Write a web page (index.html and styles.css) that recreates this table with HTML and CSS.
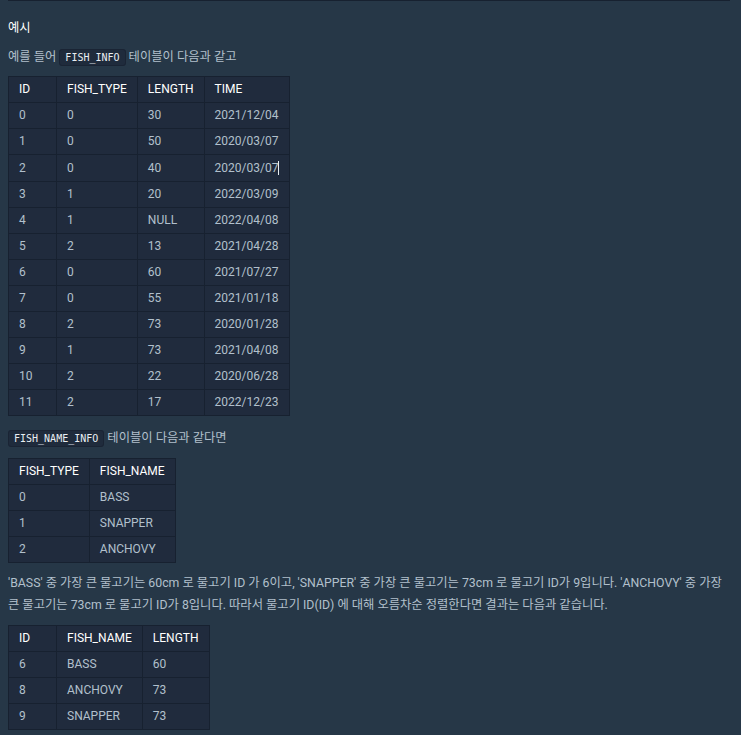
FILE: index.html
```html
<!DOCTYPE html>
<html lang="ko">
<head>
<meta charset="utf-8">
<link rel="stylesheet" href="styles.css">
</head>
<body>
<div class="wrap">
  <h5 class="title">예시</h5>
  <p class="para first">예를 들어 <code class="code">FISH_INFO</code> 테이블이 다음과 같고</p>
  <table class="tbl">
    <thead>
      <tr><th class="id">ID</th><th>FISH_TYPE</th><th>LENGTH</th><th>TIME</th></tr>
    </thead>
    <tbody>
      <tr><td>0</td><td>0</td><td>30</td><td>2021/12/04</td></tr>
      <tr><td>1</td><td>0</td><td>50</td><td>2020/03/07</td></tr>
      <tr><td>2</td><td>0</td><td>40</td><td>2020/03/07<span class="caret"></span></td></tr>
      <tr><td>3</td><td>1</td><td>20</td><td>2022/03/09</td></tr>
      <tr><td>4</td><td>1</td><td>NULL</td><td>2022/04/08</td></tr>
      <tr><td>5</td><td>2</td><td>13</td><td>2021/04/28</td></tr>
      <tr><td>6</td><td>0</td><td>60</td><td>2021/07/27</td></tr>
      <tr><td>7</td><td>0</td><td>55</td><td>2021/01/18</td></tr>
      <tr><td>8</td><td>2</td><td>73</td><td>2020/01/28</td></tr>
      <tr><td>9</td><td>1</td><td>73</td><td>2021/04/08</td></tr>
      <tr><td>10</td><td>2</td><td>22</td><td>2020/06/28</td></tr>
      <tr><td>11</td><td>2</td><td>17</td><td>2022/12/23</td></tr>
    </tbody>
  </table>
  <p class="para second"><code class="code">FISH_NAME_INFO</code> 테이블이 다음과 같다면</p>
  <table class="tbl">
    <thead>
      <tr><th>FISH_TYPE</th><th>FISH_NAME</th></tr>
    </thead>
    <tbody>
      <tr><td>0</td><td>BASS</td></tr>
      <tr><td>1</td><td>SNAPPER</td></tr>
      <tr><td>2</td><td>ANCHOVY</td></tr>
    </tbody>
  </table>
  <p class="para third">'BASS' 중 가장 큰 물고기는 60cm 로 물고기 ID 가 6이고, 'SNAPPER' 중 가장 큰 물고기는 73cm 로 물고기 ID가 9입니다. 'ANCHOVY' 중 가장 큰 물고기는 73cm 로 물고기 ID가 8입니다. 따라서 물고기 ID(ID) 에 대해 오름차순 정렬한다면 결과는 다음과 같습니다.</p>
  <table class="tbl">
    <thead>
      <tr><th class="id">ID</th><th>FISH_NAME</th><th>LENGTH</th></tr>
    </thead>
    <tbody>
      <tr><td>6</td><td>BASS</td><td>60</td></tr>
      <tr><td>8</td><td>ANCHOVY</td><td>73</td></tr>
      <tr><td>9</td><td>SNAPPER</td><td>73</td></tr>
    </tbody>
  </table>
</div>
</body>
</html>
```

FILE: styles.css
```css
html, body {
  margin: 0;
  padding: 0;
  background: #263747;
}
body {
  font-family: Roboto, "Noto Sans CJK KR", sans-serif;
  font-size: 12px;
  color: #b2c0cc;
}
.wrap {
  width: 722px;
  margin-left: 8px;
  border-top: 1px solid #172130;
}
.title {
  margin: 17px 0 0;
  font-size: 12.3px;
  line-height: 20px;
  font-weight: 400;
  color: #ffffff;
}
.para {
  margin: 0;
  font-size: 12.3px;
  line-height: 22px;
}
.para.first {
  margin: 8px 0 7px;
}
.para.second {
  margin: 11px 0 8px;
}
.para.third {
  margin: 9px 0 9px;
}
.code {
  font-family: "DejaVu Sans Mono", monospace;
  font-size: 10px;
  color: #e9eef3;
  background: #1f2b3c;
  border: 1px solid #1a2434;
  border-radius: 3px;
  padding: 2px 5px;
}
.tbl {
  border-collapse: collapse;
  background: #202b3d;
  border: 1px solid #172130;
}
.tbl th, .tbl td {
  border: 1px solid #172130;
  padding: 6px 10px;
  line-height: 13px;
  text-align: left;
  white-space: nowrap;
}
.tbl th {
  color: #ffffff;
  font-weight: 400;
}
.tbl th.id {
  width: 27px;
}
.caret {
  display: inline-block;
  width: 1px;
  height: 14px;
  background: #e8eef4;
  vertical-align: -3px;
}
```
